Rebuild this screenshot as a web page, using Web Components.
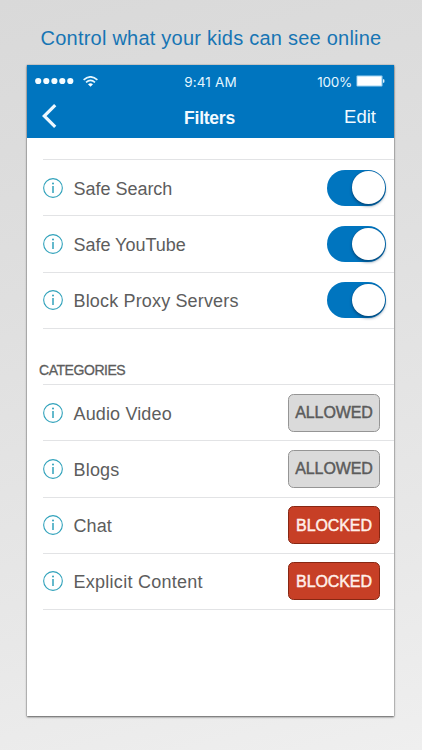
<!DOCTYPE html>
<html lang="en">
<head>
<meta charset="utf-8">
<title>Filters</title>
<style>
body{margin:0;font-family:"Liberation Sans",Arial,sans-serif}
</style>
</head>
<body>
<filters-page></filters-page>
<script>
const define=(name,html)=>customElements.define(name,class extends HTMLElement{
  constructor(){super();const t=document.createElement('template');t.innerHTML=html;
    this.attachShadow({mode:'open'}).append(t.content.cloneNode(true));}
});

define('status-bar',`<style>
:host{display:grid;grid-template-columns:1fr auto 1fr;align-items:center;height:33px;padding:0 9px 0 8px;color:#e4f7ff;font:14px/16px Inter,sans-serif;box-sizing:border-box}
svg{display:block}
.l,.r{display:flex;align-items:center}
.l{gap:9px;margin-top:-1px}
.r{justify-content:flex-end;gap:4px;font-size:13.5px;letter-spacing:-.25px}
.r svg{margin-top:-1px}
.t{font-size:13.5px;letter-spacing:.15px;padding:1px 0 0 1px}
.r span{padding-top:1px}
</style>
<div class="l">
<svg width="39" height="8" fill="#f4fcff"><circle cx="3.2" cy="4" r="3.1"/><circle cx="11.3" cy="4" r="3.1"/><circle cx="19.4" cy="4" r="3.1"/><circle cx="27.3" cy="4" r="3.1"/><circle cx="35.3" cy="4" r="3.1"/></svg>
<svg width="15" height="11" viewBox="0 0 15 11" fill="none" stroke="#e4f7ff" stroke-width="1.6"><path d="M.6 3.8Q7.5-2.2 14.4 3.8M3 6.4Q7.5 2.4 12 6.4"/><path d="M7.5 10.8L5 8.3Q7.5 6.2 10 8.3Z" fill="#fff" stroke="none"/></svg>
</div>
<div class="t">9:41 AM</div>
<div class="r"><span>100%</span><svg width="29" height="12"><rect x=".5" y=".6" width="26" height="10.8" rx="1" fill="#9fd3f2"/><rect x="1.4" y="1.5" width="24" height="9" rx=".5" fill="#fff"/><path d="M27 4.2h.7q.7 0 .7.7v2.2q0 .7-.7.7H27z" fill="#d8effc"/></svg></div>`);

define('nav-bar',`<style>
:host{display:grid;grid-template-columns:1fr auto 1fr;align-items:center;height:40px;padding:0 18px 0 15px;color:#f2faff;font-size:18px;line-height:22px;box-sizing:border-box}
svg{display:block;margin-top:-4px}
b{letter-spacing:-.25px;font-size:17.5px;margin:-1px 0 0 1px}
span{justify-self:end;font-size:18.5px;margin-top:-3px}
</style>
<svg width="16" height="24" viewBox="0 0 16 24" fill="none" stroke="#eef8ff" stroke-width="3.2"><path d="M13.2 1.2L2.2 12l11 10.8"/></svg>
<b>Filters</b><span>Edit</span>`);

define('info-icon',`<style>:host{display:block;width:20px;height:20px}svg{display:block}</style>
<svg width="20" height="20" fill="none" stroke="#31a2bb"><circle cx="10" cy="10" r="9.35" stroke-width="1.1"/><path d="M10 7.9v7.2" stroke-width="1.5"/><circle cx="10" cy="5.5" r="1" fill="#31a2bb" stroke="none"/></svg>`);

define('toggle-switch',`<style>
:host{display:flex;justify-content:flex-end;align-items:center;box-sizing:border-box;width:59px;height:36px;padding:0 1.5px 0 0;border-radius:18px;background:#0075bf}
i{display:block;width:32.6px;height:32.6px;border-radius:50%;background:#fff;box-shadow:0 2px 3px #00305899,0 0 1px #003058aa}
</style><i></i>`);

define('status-button',`<style>
:host{display:flex;align-items:center;justify-content:center;box-sizing:border-box;width:92px;height:38px;margin-right:14px;padding-top:1px;border:1px solid #959595;border-radius:5.5px;background:#dadada;color:#5b5b5b;font-size:16px;line-height:18px;-webkit-text-stroke:.45px currentColor;letter-spacing:-.1px}
:host([blocked]){background:#c73f26;border-color:#872713;color:#fff0ea}
</style><slot></slot>`);

define('filter-row',`<style>
:host{display:flex;align-items:center;box-sizing:border-box;height:56.25px;margin-left:16px;border-bottom:1px solid #e2e3e5;color:#5d5d5d}
.name{flex:1;padding-left:10.5px;font-size:18px;line-height:22px;padding-top:2px;letter-spacing:var(--track,0)}
::slotted(toggle-switch){margin-right:8px}
</style><info-icon></info-icon><div class="name"><slot></slot></div><slot name="control"></slot>`);

define('filter-group',`<style>
:host{display:block}
.head{display:flex;align-items:flex-end;box-sizing:border-box;height:var(--head);padding:0 0 6px 12px;font-size:14px;line-height:16px;color:#5d5d5d;-webkit-text-stroke:.3px currentColor;letter-spacing:-.45px}
.line{height:1px;margin-left:16px;background:#e2e3e5}
</style><div class="head"><slot name="heading"></slot></div><div class="line"></div><slot></slot>`);

define('filters-page',`<style>
:host{display:flex;flex-direction:column;align-items:center;box-sizing:border-box;width:422px;height:750px;overflow:hidden;background:linear-gradient(165deg,#d9d9d9 0%,#dfdfdf 35%,#e8e8e8 75%,#efefef 100%)}
h1{margin:0;height:65px;box-sizing:border-box;padding-top:26px;font-weight:400;font-size:20px;line-height:24px;color:#1775b4;white-space:nowrap;letter-spacing:.23px}
main{width:367px;height:651px;margin-right:1px;background:#fff;box-shadow:0 1px 2px #0009,0 0 1px #0006}
header{height:73px;background:#0075bf}
.a{--head:21px}.b{--head:55.25px}
</style>
<h1>Control what your kids can see online</h1>
<main>
<header><status-bar></status-bar><nav-bar></nav-bar></header>
<filter-group class="a">
<filter-row style="--track:-.02px">Safe Search<toggle-switch slot="control"></toggle-switch></filter-row>
<filter-row style="--track:-.02px">Safe YouTube<toggle-switch slot="control"></toggle-switch></filter-row>
<filter-row style="--track:.16px">Block Proxy Servers<toggle-switch slot="control"></toggle-switch></filter-row>
</filter-group>
<filter-group class="b"><span slot="heading">CATEGORIES</span>
<filter-row style="--track:.14px">Audio Video<status-button slot="control">ALLOWED</status-button></filter-row>
<filter-row style="--track:.2px">Blogs<status-button slot="control">ALLOWED</status-button></filter-row>
<filter-row style="--track:.1px">Chat<status-button slot="control" blocked>BLOCKED</status-button></filter-row>
<filter-row style="--track:.27px">Explicit Content<status-button slot="control" blocked>BLOCKED</status-button></filter-row>
</filter-group>
</main>`);
</script>
</body>
</html>
